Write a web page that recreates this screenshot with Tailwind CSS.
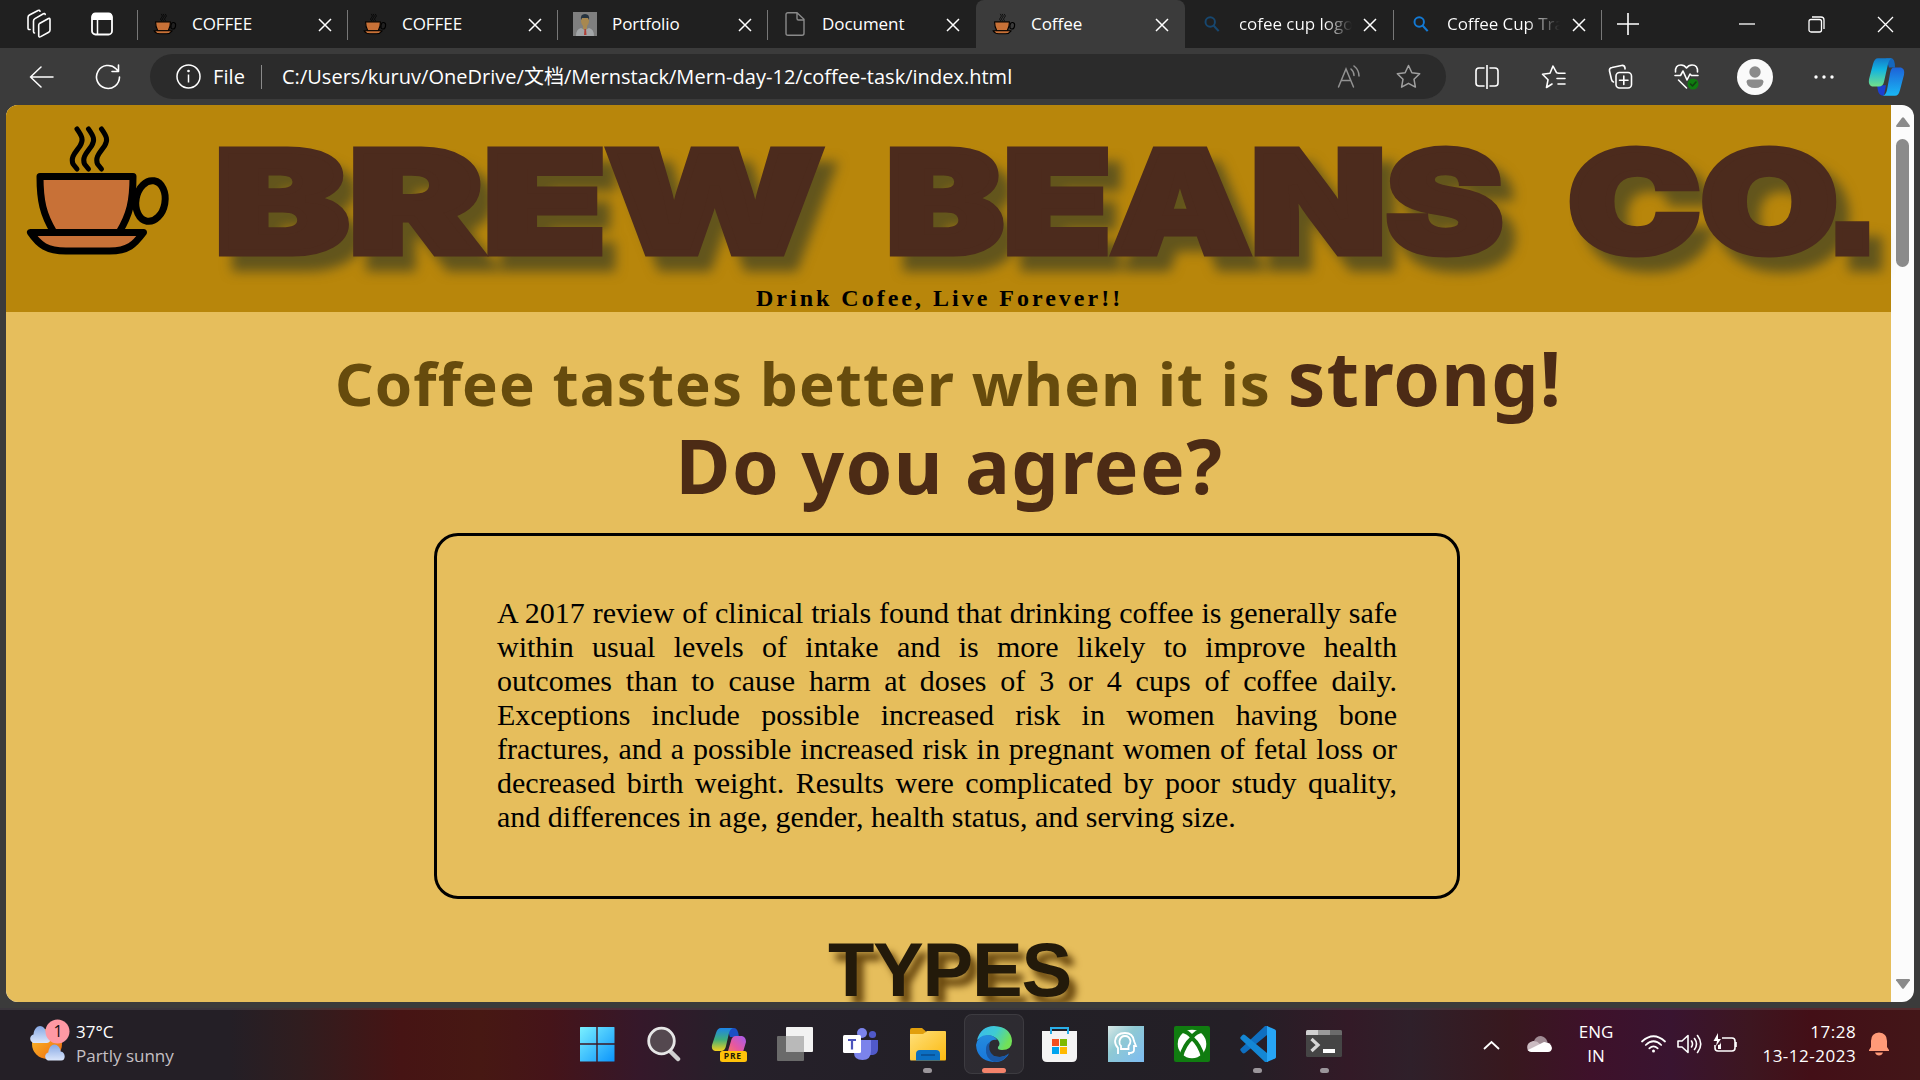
<!DOCTYPE html>
<html lang="en">
<head>
<meta charset="utf-8">
<title>Coffee</title>
<script src="https://cdn.jsdelivr.net/npm/@tailwindcss/browser@4"></script>
</head>
<body class="w-[1920px] h-[1080px] overflow-hidden bg-[#3b3b3b] text-white font-['Open_Sans','Noto_Sans_CJK_SC',sans-serif] flex flex-col">

<svg class="absolute w-0 h-0">
  <defs>
    <linearGradient id="win" gradientUnits="userSpaceOnUse" x1="0" y1="0" x2="36" y2="36"><stop offset="0" stop-color="#7df3ff"/><stop offset="1" stop-color="#0a93fb"/></linearGradient>
    <linearGradient id="cpA" x1="0" y1="0" x2="0" y2="1"><stop offset="0" stop-color="#1479c9"/><stop offset=".4" stop-color="#12b4e0"/><stop offset="1" stop-color="#72e08a"/></linearGradient>
    <linearGradient id="cpB" x1="0" y1="0" x2="0" y2="1"><stop offset="0" stop-color="#1d62d8"/><stop offset="1" stop-color="#19b8f5"/></linearGradient>
    <linearGradient id="cpC" x1="0" y1="0" x2="0" y2="1"><stop offset="0" stop-color="#1d84e8"/><stop offset=".5" stop-color="#3fae7c"/><stop offset="1" stop-color="#f4d01c"/></linearGradient>
    <linearGradient id="cpD" x1="1" y1="0" x2="0" y2="1"><stop offset="0" stop-color="#a45cf0"/><stop offset=".5" stop-color="#e7589f"/><stop offset="1" stop-color="#ff8a3c"/></linearGradient>
    <linearGradient id="fold" x1="0" y1="0" x2="1" y2="1"><stop offset="0" stop-color="#ffe07a"/><stop offset="1" stop-color="#fbb90f"/></linearGradient>
    <linearGradient id="edgeA" x1="0" y1="0" x2="1" y2=".4"><stop offset="0" stop-color="#2fb4f0"/><stop offset=".55" stop-color="#35c9d0"/><stop offset="1" stop-color="#6be04e"/></linearGradient>
    <linearGradient id="edgeB" x1="0" y1="0" x2="0" y2="1"><stop offset="0" stop-color="#1a86dd"/><stop offset="1" stop-color="#0b6fd8"/></linearGradient>
    <linearGradient id="headBg" x1="0" y1="0" x2="1" y2="1"><stop offset="0" stop-color="#d9e8e6"/><stop offset=".4" stop-color="#8fc9d3"/><stop offset="1" stop-color="#7dbcf2"/></linearGradient>
    <linearGradient id="sun" x1="0" y1="0" x2="1" y2="1"><stop offset="0" stop-color="#f9c22c"/><stop offset="1" stop-color="#f0660e"/></linearGradient>
    <linearGradient id="cloudG" x1="0" y1="0" x2="0" y2="1"><stop offset="0" stop-color="#86a8e4"/><stop offset="1" stop-color="#dbe6fb"/></linearGradient>
    <symbol id="cup" viewBox="24 121 150 138">
      <g fill="none" stroke="#000" stroke-linecap="round" stroke-linejoin="round">
        <path stroke-width="5" d="M77 129c5 7 7 11 3 17s-10 11-7 18l4 5M88.500 129c5 7 7 11 3 17s-10 11-7 18l4 5M101.500 129c5 7 7 11 3 17s-10 11-7 18l4 5"/>
        <path fill="#c87137" stroke-width="7" d="M40 176.500h93c0 24-3 38-14 56H54c-11-18-14-32-14-56z"/>
        <ellipse cx="150.500" cy="201" rx="14.500" ry="20.500" stroke-width="7" transform="rotate(10 150.500 201)"/>
        <path fill="#c87137" stroke-width="7" d="M30.500 232.500h113c-9 12-15 18.500-34 18.500H66c-19 0-27-6-35.500-18.500z"/>
      </g>
    </symbol>
    <symbol id="x" viewBox="0 0 14 14"><path d="M1 1l12 12M13 1L1 13" stroke="#fff" stroke-width="1.500" fill="none"/></symbol>
    <symbol id="mag" viewBox="0 0 18 18"><path d="M10.500 10.500L16.500 17" stroke="currentColor" stroke-width="2.400"/><circle cx="7" cy="6.800" r="5.300" fill="none" stroke="currentColor" stroke-width="2.200"/></symbol>
    <symbol id="cl" viewBox="0 0 22 17"><path fill="url(#cloudG)" d="M4 17a4.500 4.500 0 0 1 .5-8.500C5 3 8 0 11 0s6 3 6.500 7.500C23 8 23 17 18 17z"/></symbol>
  </defs>
</svg>

<!-- Tab strip -->
<div class="h-12 shrink-0 bg-[#202020] flex items-stretch text-[17px] tracking-[-0.05px]">
  <div class="w-[137px] flex items-center">
    <svg class="ml-[26px] w-[26px] h-[30px]" viewBox="0 0 26 30" fill="none" stroke="#fff" stroke-width="1.600" stroke-linejoin="round" stroke-linecap="round"><path d="M13.500 14.500l9-5q1.500-.8 1.500 1v10.500q0 1.500-1.300 2.200l-8 4.400q-2 1-2-1V16.500q0-1.300.8-2zM8.500 24q-1 0-1-1.500V12q0-1.600 1.400-2.400l8.500-4.800q1.400-.8 1.800.7M4 20.500q-2 .3-2-1.500V8.500q0-1.700 1.400-2.500L12 1.500q1.500-.7 2 .7"/></svg>
    <svg class="ml-[39px] w-[22px] h-[24px]" viewBox="0 0 22 24"><rect x="1" y="1.500" width="20" height="21" rx="3.500" fill="none" stroke="#fff" stroke-width="1.800"/><path d="M1 8V4q0-3 3-3h14q3 0 3 3v4z" fill="#fff"/><path d="M6.500 8v14" stroke="#fff" stroke-width="1.500"/></svg>
  </div>
  <div class="w-[210px] flex items-center pl-4 relative before:content-[''] before:absolute before:left-0 before:top-[10px] before:h-[30px] before:w-px before:bg-[#777]">
    <svg class="w-6 h-6"><use href="#cup"/></svg><span class="ml-[15px] w-[126px]">COFFEE</span><svg class="w-[14px] h-[14px] mt-px"><use href="#x"/></svg>
  </div>
  <div class="w-[210px] flex items-center pl-4 relative before:content-[''] before:absolute before:left-0 before:top-[10px] before:h-[30px] before:w-px before:bg-[#777]">
    <svg class="w-6 h-6"><use href="#cup"/></svg><span class="ml-[15px] w-[126px]">COFFEE</span><svg class="w-[14px] h-[14px] mt-px"><use href="#x"/></svg>
  </div>
  <div class="w-[210px] flex items-center pl-4 relative before:content-[''] before:absolute before:left-0 before:top-[10px] before:h-[30px] before:w-px before:bg-[#777]">
    <svg class="w-6 h-6" viewBox="0 0 24 24"><path fill="#7f7f7f" d="M0 0h24v24H0z"/><path fill="#a3a6a8" d="M3 24q0-7 5-8l4 2 4-2q5 1 5 8z"/><ellipse cx="12" cy="9" rx="4" ry="5.500" fill="#a88850"/><path fill="#a88850" d="M10 13h4v4l-2 1-2-1z"/><path fill="#26333f" d="M8 8q-1-6 4-6t4 6l-1-2H9z"/><path fill="#b04038" d="M11.500 17h1.500l.5 6h-2.500z"/></svg><span class="ml-[15px] w-[126px]">Portfolio</span><svg class="w-[14px] h-[14px] mt-px"><use href="#x"/></svg>
  </div>
  <div class="w-[209px] flex items-center pl-4 relative before:content-[''] before:absolute before:left-0 before:top-[10px] before:h-[30px] before:w-px before:bg-[#777]">
    <svg class="w-6 h-6" viewBox="0 0 24 24" fill="none" stroke="#8a8a8a" stroke-width="1.400"><path d="M5 .700h9l7 6.500v14q0 2-2 2H5q-2 0-2-2v-18.500q0-2 2-2zM14 1v5.500q0 1.500 1.500 1.500H21"/></svg><span class="ml-[15px] w-[124px]">Document</span><svg class="w-[14px] h-[14px] mt-px"><use href="#x"/></svg>
  </div>
  <div class="w-[209px] flex items-center pl-4 bg-[#3b3b3b] rounded-t-lg">
    <svg class="w-6 h-6"><use href="#cup"/></svg><span class="ml-[15px] w-[124px]">Coffee</span><svg class="w-[14px] h-[14px] mt-px"><use href="#x"/></svg>
  </div>
  <div class="w-[208px] flex items-center pl-[19px]">
    <svg class="w-4 h-4 text-[#17476f]"><use href="#mag"/></svg><span class="ml-[19px] w-[113px] overflow-hidden whitespace-nowrap bg-gradient-to-r from-white from-75% to-transparent bg-clip-text text-transparent">cofee cup logo</span><svg class="ml-[11px] shrink-0 w-[14px] h-[14px] mt-px"><use href="#x"/></svg>
  </div>
  <div class="w-[209px] flex items-center pl-[20px] relative before:content-[''] before:absolute before:left-0 before:top-[10px] before:h-[30px] before:w-px before:bg-[#777] after:content-[''] after:absolute after:right-0 after:top-[10px] after:h-[30px] after:w-px after:bg-[#777]">
    <svg class="w-4 h-4 text-[#1379d3]"><use href="#mag"/></svg><span class="ml-[18px] w-[113px] overflow-hidden whitespace-nowrap bg-gradient-to-r from-white from-70% to-transparent bg-clip-text text-transparent">Coffee Cup Tra</span><svg class="ml-[12px] shrink-0 w-[14px] h-[14px] mt-px"><use href="#x"/></svg>
  </div>
  <div class="flex-1 flex items-center">
    <svg class="ml-[15px] w-[22px] h-[22px]" viewBox="0 0 22 22"><path d="M11 0v22M0 11h22" stroke="#fff" stroke-width="1.600"/></svg>
    <svg class="ml-[100px] w-[16px] h-[16px]" viewBox="0 0 16 16"><path d="M0 8h16" stroke="#fff" stroke-width="1.300"/></svg>
    <svg class="ml-[53px] w-[17px] h-[17px]" viewBox="0 0 17 17" fill="none" stroke="#fff" stroke-width="1.300"><rect x="1" y="3.500" width="12.500" height="12.500" rx="2"/><path d="M4 1h9q3 0 3 3v9"/></svg>
    <svg class="ml-[52px] w-[17px] h-[17px]" viewBox="0 0 17 17"><path d="M1 1l15 15M16 1L1 16" stroke="#fff" stroke-width="1.300"/></svg>
  </div>
</div>

<!-- Toolbar -->
<div class="h-[57px] shrink-0 flex items-center">
  <svg class="ml-[29px] w-[25px] h-[22px]" viewBox="0 0 25 22" fill="none" stroke="#fff" stroke-width="1.500" stroke-linecap="round" stroke-linejoin="round"><path d="M12 1L1.500 11 12 21M1.500 11H24"/></svg>
  <svg class="ml-[41px] w-[26px] h-[26px]" viewBox="0 0 26 26" fill="none" stroke="#fff" stroke-width="1.600" stroke-linecap="round" stroke-linejoin="round"><path d="M24.500 13A11.500 11.500 0 1 1 21 4.700L23 7M23.500 1v6.500H17"/></svg>
  <div class="ml-[29px] w-[1296px] h-[45px] rounded-full bg-[#2b2b2b] flex items-center">
    <svg class="ml-[26px] w-[25px] h-[25px]" viewBox="0 0 25 25" fill="none" stroke="#fff" stroke-width="1.500"><circle cx="12.500" cy="12.500" r="11.500"/><path d="M12.500 10.500v8"/><circle cx="12.500" cy="7" r=".6" fill="#fff"/></svg>
    <span class="ml-[12px] w-[48px] text-[20px] tracking-[0.1px]">File</span>
    <span class="w-px h-6 bg-[#8a8a8a]"></span>
    <span class="ml-[20px] w-[1055px] text-[20px] tracking-[0.02px] whitespace-nowrap">C:/Users/kuruv/OneDrive/文档/Mernstack/Mern-day-12/coffee-task/index.html</span>
    <svg class="w-[24px] h-[24px] shrink-0" viewBox="0 0 24 24" fill="none" stroke="#929292" stroke-width="1.500" stroke-linecap="round"><path d="M1.500 22L9 4l7.500 18M4.500 15.500h9M14 4q3 2.500 3 6.500M17 1q5 4 5 10"/></svg>
    <svg class="ml-[35px] w-[25px] h-[25px] shrink-0" viewBox="0 0 25 25" fill="none" stroke="#a0a0a0" stroke-width="1.500" stroke-linejoin="round"><path d="M12.500 1.500l3.400 7.200 7.800 1-5.700 5.500 1.400 7.900-6.900-3.800-6.900 3.800L7 15.200 1.300 9.700l7.800-1z"/></svg>
  </div>
  <svg class="ml-[29px] w-[24px] h-[24px]" viewBox="0 0 24 24" fill="none" stroke="#fff" stroke-width="1.600" stroke-linecap="round"><path d="M12 0v24M9 3H4Q1 3 1 6v12q0 3 3 3h5M15 3h5q3 0 3 3v12q0 3-3 3h-5"/></svg>
  <svg class="ml-[42px] w-[25px] h-[24px]" viewBox="0 0 25 24" fill="none" stroke="#fff" stroke-width="1.600" stroke-linecap="round" stroke-linejoin="round"><path d="M17 8l-1.500-.3L12 1 9 8.200l-7.500 1L7 14.800 5.500 22.500 11 19M17 8.200h7M16 13.500h8M17 19h7"/></svg>
  <svg class="ml-[42px] w-[25px] h-[29px]" viewBox="0 -2 25 29" fill="none" stroke="#fff" stroke-width="1.600" stroke-linecap="round" stroke-linejoin="round"><rect x="8" y="8.500" width="15.500" height="15.500" rx="3.500"/><path d="M15.800 12v8.500M11.500 16.200H20M17 5V4q-.5-3-3.500-2.500L4 3.500Q1 4 1.500 7l2 8.500q.5 2 2 2.500"/></svg>
  <svg class="ml-[41px] w-[25px] h-[27px]" viewBox="0 0 25 27" fill="none" stroke="#fff" stroke-width="1.600" stroke-linecap="round" stroke-linejoin="round"><path d="M1.500 9Q1 2 7 2q3.500 0 5.500 3Q14.500 2 18 2q6 0 5.500 7M1 12.500h5.500L9 8l4 9 3-6 1.500 1.500H24M4.500 17l8 8"/><circle cx="19" cy="21" r="5.500" fill="#107c10" stroke="none"/><path d="M16.500 21l2 2 3.500-4" stroke="#123f12"/></svg>
  <svg class="ml-[38px] w-[36px] h-[36px]" viewBox="0 0 36 36"><circle cx="18" cy="18" r="18" fill="#fafafa"/><circle cx="18" cy="13" r="5.700" fill="#8b8b8b"/><path d="M12 20.500h12q2.500 0 2.500 2.500-1 6-8.500 6t-8.500-6q0-2.500 2.500-2.500z" fill="#8b8b8b"/></svg>
  <svg class="ml-[41px] w-[20px] h-[4px]" viewBox="0 0 20 4" fill="#fff"><circle cx="2" cy="2" r="1.700"/><circle cx="10" cy="2" r="1.700"/><circle cx="18" cy="2" r="1.700"/></svg>
  <svg class="ml-[34px] w-[37px] h-[40px]" viewBox="0 0 37 34" preserveAspectRatio="none"><path fill="#1c3fd0" d="M9 24h9l-2 9q-5 0-6-4z"/><path fill="#1567bd" d="M18 1h5q4 0 4 8h-6z"/><path fill="url(#cpA)" d="M10 1h14q-3 1-4 5l-4 15q-1 4-5 4H4q-4-1-3-6L5 6q1.500-5 5-5z"/><path fill="url(#cpB)" d="M26 9h7q4 1 3 6l-4 13q-1.500 5-5 5H15q3-1 4-5l3-14q1-5 4-5z"/></svg>
</div>

<!-- Page viewport -->
<div class="ml-[6px] w-[1908px] h-[897px] shrink-0 rounded-xl overflow-hidden flex bg-[#fcfcfc]">
  <main class="w-[1885px] bg-[#e6be5c] text-black">
    <header class="h-[207px] bg-[#b8860b] flex flex-col">
      <div class="flex h-[172px]">
        <svg class="w-[180px] h-[172px] shrink-0" viewBox="6 105 180 172"><use href="#cup" x="24" y="121" width="150" height="138"/></svg>
        <h1 class="w-[1705px] h-[172px]">
          <svg class="w-full h-full overflow-visible drop-shadow-[13px_15px_6px_rgba(45,55,38,0.62)]" viewBox="186 105 1705 172" fill="#4c2b1d" stroke="#4c2b1d" stroke-width="7" font-family="Inter" font-weight="900" font-size="141"><text x="214.500" y="252.500" textLength="609" lengthAdjust="spacingAndGlyphs">BREW</text><text x="886" y="252.500" textLength="617" lengthAdjust="spacingAndGlyphs">BEANS</text><text y="252.500"><tspan x="1568" textLength="270" lengthAdjust="spacingAndGlyphs">CO</tspan><tspan x="1826" font-family="Liberation Sans" font-weight="700" font-size="190">.</tspan></text></svg>
        </h1>
      </div>
      <p class="pl-[750px] mt-[7px] leading-[28px] text-[24px] font-bold tracking-[3px] font-['Liberation_Serif',serif] whitespace-nowrap">Drink Cofee, Live Forever!!</p>
    </header>
    <div class="h-[221px] pt-[21px] text-center font-['Noto_Sans',sans-serif] font-bold text-[#4c2b15] text-[75px] whitespace-nowrap">
      <p class="leading-[88px] tracking-[1.1px]"><span class="text-[60px] leading-none text-[#664b0d]">Coffee tastes better when it is </span>strong!</p>
      <p class="leading-[88px] tracking-[1.450px] pl-[2px]">Do you agree?</p>
    </div>
    <section class="ml-[428px] w-[1026px] h-[366px] border-3 border-black rounded-3xl px-[60px] pt-[60px] font-['Liberation_Serif',serif] text-[30px] leading-[34px] [&>p]:[text-align-last:justify] [&>p]:whitespace-nowrap">
      <p>A 2017 review of clinical trials found that drinking coffee is generally safe</p>
      <p>within usual levels of intake and is more likely to improve health</p>
      <p>outcomes than to cause harm at doses of 3 or 4 cups of coffee daily.</p>
      <p>Exceptions include possible increased risk in women having bone</p>
      <p>fractures, and a possible increased risk in pregnant women of fetal loss or</p>
      <p>decreased birth weight. Results were complicated by poor study quality,</p>
      <div>and differences in age, gender, health status, and serving size.</div>
    </section>
    <h2 class="mt-[28px] pl-[2px] text-center font-['Liberation_Sans',sans-serif] font-bold text-[76px] tracking-[-1.200px] leading-[86px] text-[#231a0a] [text-shadow:7px_9px_7px_#6b4a10]">TYPES</h2>
  </main>
  <div class="flex-1 flex flex-col items-center pt-[12px] pb-[13px]">
    <svg class="w-[14px] h-[10px]" viewBox="0 0 14 10"><path d="M6 .8q1-1.200 2 0l6 8q0 1.200-1 1.200H1q-1 0-1-1.200z" fill="#8b8b8b"/></svg>
    <div class="mt-[12px] w-[13px] h-[128px] rounded-full bg-[#8b8b8b]"></div>
    <svg class="mt-auto w-[14px] h-[10px] rotate-180" viewBox="0 0 14 10"><path d="M6 .8q1-1.200 2 0l6 8q0 1.200-1 1.200H1q-1 0-1-1.200z" fill="#8b8b8b"/></svg>
  </div>
</div>

<!-- Taskbar -->
<footer class="mt-[6px] h-[72px] shrink-0 border-t-2 border-white/10 bg-[linear-gradient(90deg,#241f26_0px,#241f26_230px,#301d1f_300px,#461414_400px,#471813_480px,#451419_550px,#35182a_640px,#26202a_730px,#222026_1000px,#241f26_1240px,#331a27_1350px,#2f202a_1410px,#38181e_1510px,#3e112a_1590px,#391430_1670px,#3d1620_1750px,#430f17_1810px,#431618_1920px)] flex items-center">
  <div class="w-[564px] flex items-center">
    <svg class="ml-[28px] w-[42px] h-[54px] shrink-0" viewBox="28 1016 42 54"><circle cx="47" cy="1042" r="15" fill="url(#sun)"/><use href="#cl" x="29" y="1024" width="22" height="17"/><use href="#cl" x="44" y="1042" width="21" height="17"/><circle cx="57.500" cy="1029.500" r="12" fill="#ff99a4"/><text x="53.500" y="1035" font-size="16" fill="#111" font-family="Open Sans">1</text></svg>
    <div class="ml-[6px] -mt-[3px] text-[17px] leading-[24px]"><div>37°C</div><div class="text-[#c5c0c4]">Partly sunny</div></div>
  </div>
  <div class="flex h-full [&>div]:w-[66.100px] [&>div]:shrink-0 [&>div]:flex [&>div]:justify-center [&>div]:relative [&>div]:pt-[16px]">
    <div><svg class="w-9 h-9" viewBox="0 0 36 36" fill="url(#win)"><path d="M1.500 1H17.300v16.300H1V1.500zM18.700 1H35a.5.500 0 0 1 .5.500v15.800H18.700zM1 18.700h16.300V35.500H1.500a.5.500 0 0 1-.5-.5zM18.700 18.700h16.800V35a.5.500 0 0 1-.5.500H18.700z"/></svg></div>
    <div><svg class="w-9 h-9" viewBox="0 0 36 36"><path d="M24 24l9 9" stroke="#cfcfcf" stroke-width="4.500" stroke-linecap="round"/><circle cx="16.500" cy="15" r="12.800" fill="#54484f" stroke="#e6e6e6" stroke-width="2.800"/></svg></div>
    <div><svg class="w-9 h-9" viewBox="0 0 36 36"><path fill="#1b4fc4" d="M16 2h7q4 0 5 9h-9z"/><path fill="url(#cpC)" d="M10 2h12q-3 1-4 5l-3 13q-1 5-5 5H4q-4-1-3-6L5 7q1.500-5 5-5z"/><path fill="url(#cpD)" d="M25 10h6q4 1 4 6l-3 10q-1 4-5 4H13q3-1 4-5l3-10q1-5 5-5z"/><rect x="9" y="25" width="27" height="11" rx="2.500" fill="#ffc20a"/><text x="12.800" y="33.300" font-size="8.500" font-weight="700" letter-spacing=".8" fill="#231a05" font-family="Open Sans">PRE</text></svg></div>
    <div><svg class="w-9 h-9" viewBox="0 0 36 36"><rect x="9" y="1" width="27" height="25" rx="1" fill="#f2f2f2"/><rect y="10" width="27" height="25" rx="1" fill="#6a6a6a"/><path fill="#b9b9b9" d="M9 10h18v16H9z"/></svg></div>
    <div><svg class="w-9 h-9" viewBox="0 0 36 36"><circle cx="19" cy="7" r="5" fill="#7b83eb"/><circle cx="29.500" cy="8.500" r="3.600" fill="#5059c9"/><path d="M26 14h9v9q0 5-5 6h-4z" fill="#5059c9"/><path d="M11 14h17v11q0 9-8.500 9T11 27z" fill="#7b83eb"/><rect y="9" width="18" height="18" rx="1.500" fill="#fff"/><path d="M5 14h8M9 14v9.500" stroke="#4b53bc" stroke-width="2.200"/></svg></div>
    <div><svg class="w-9 h-9" viewBox="0 0 36 36"><path fill="#e19f0c" d="M0 4q0-2 2-2h10l4 3.500L14 9H0z"/><path fill="url(#fold)" d="M0 8h13l4-3h18q1 0 1 1v27q0 1.500-1 1.500H1q-1 0-1-1.500z"/><path fill="#0b6fc2" d="M6 34.500V28q0-4 4-4h16q4 0 4 4v6.500z"/><path stroke="#0a4b8c" stroke-width="1.500" d="M11 29h14"/></svg><i class="absolute bottom-[7px] w-[9px] h-[5px] rounded-full bg-[#9b969b]"></i></div>
    <div class="before:content-[''] before:absolute before:top-[4px] before:left-[3px] before:w-[60px] before:h-[60px] before:rounded-lg before:bg-white/5 before:border before:border-white/8"><svg class="w-9 h-9" viewBox="0 0 36 36"><path fill="url(#edgeA)" d="M1 14Q5 0 18 0q17 1 18 15 0 9-10 9-5 0-4-3 3-3 0-7-8-9-21 0z"/><path fill="url(#edgeB)" d="M0 19Q2 9 11 9q7 0 10 5-6-1-8 4-2 13 11 13 5 0 9-3-6 9-16 8Q1 34 0 19z"/><path fill="#0e4fa0" d="M14 16q-3 9 4 14 8 3 15-3-5 9-15 9-9-4-8-13 0-5 4-7z"/></svg><i class="absolute bottom-[7px] w-6 h-[5px] rounded-full bg-[#f4836b]"></i></div>
    <div><svg class="w-9 h-9" viewBox="0 0 36 36"><path fill="#f4f4f4" d="M0 5h35v26q0 5-5 5H5q-5 0-5-5z"/><path fill="none" stroke="#29aee8" stroke-width="2" d="M9 8V2h17v6"/><path fill="#f25022" d="M10 13h7v7h-7z"/><path fill="#7fba00" d="M18 13h7v7h-7z"/><path fill="#00a4ef" d="M10 21h7v7h-7z"/><path fill="#ffb900" d="M18 21h7v7h-7z"/></svg></div>
    <div><svg class="w-9 h-9" viewBox="0 0 36 36"><path fill="url(#headBg)" d="M0 0h36v36H0z"/><g fill="none" stroke="#fff" stroke-width="1.800"><path d="M10 28v-6q-3-3-3-7 1-8 10-8 8 0 9 8l2 5h-2v4q0 3-5 3v2"/><path d="M13 23v-3q-2-2-1.500-5 1-5 5.500-5t5.500 5q0 3-2 5v3z"/></g></svg></div>
    <div><svg class="w-9 h-9" viewBox="0 0 36 36"><rect width="36" height="36" rx="2" fill="#107c10"/><circle cx="18" cy="18" r="14.300" fill="#fff"/><path fill="none" stroke="#107c10" stroke-width="4" d="M7 31Q10 19 18 12q8 7 11 19M9 5q5 1 9 6 4-5 9-6"/></svg></div>
    <div><svg class="w-9 h-9" viewBox="0 0 36 36"><path fill="#0f6fc0" d="M27 9L5 27q-1.500 1-3-.5L.7 24.700q-1-1.200.2-2.300L25 0h3z"/><path fill="#1487d4" d="M27 27L5 9Q3.500 8 2 9.500L.7 11q-1 1.200.2 2.300L25 36h3z"/><path fill="#27a5f5" d="M27 0l8 3.500q1 .5 1 1.500v26q0 1-1 1.500L27 36z"/></svg><i class="absolute bottom-[7px] w-[9px] h-[5px] rounded-full bg-[#9b969b]"></i></div>
    <div><svg class="w-9 h-9" viewBox="0 0 36 36"><rect y="4" width="36" height="27" rx="1.500" fill="#454545"/><path fill="#d0d0d0" d="M1.500 4H12v5H0V5.500Q0 4 1.500 4z"/><path fill="#9a9a9a" d="M12 4h12v5H12z"/><path fill="#6b6b6b" d="M24 4h10.500Q36 4 36 5.500V9H24z"/><path d="M5.500 13l6.500 6-6.500 6" fill="none" stroke="#d8d8d8" stroke-width="3.200"/><path fill="#fff" d="M17 23h12v4H17z"/></svg><i class="absolute bottom-[7px] w-[9px] h-[5px] rounded-full bg-[#9b969b]"></i></div>
  </div>
  <div class="flex-1 flex items-center text-[17px] leading-[24px]">
    <svg class="ml-[126px] w-[17px] h-[10px] shrink-0" viewBox="0 0 17 10"><path d="M1 9l7.500-7L16 9" fill="none" stroke="#fff" stroke-width="1.800"/></svg>
    <svg class="ml-[27px] w-[25px] h-[17px] shrink-0 -mt-0.5" viewBox="0 0 25 17"><path fill="#a08c94" d="M7 5q2-5 7-5 5 1 6.500 6L13 9z"/><path fill="#cbbcc2" d="M1 15q-3-8 5-10 4-.5 7 3l6 5z"/><path fill="#fff" d="M4 16q-2 0-3-2l16-8q7 0 8 6-.5 4-4 4z"/></svg>
    <div class="ml-[24px] w-[40px] -mt-0.5 text-center">ENG<br>IN</div>
    <svg class="ml-[25px] w-[25px] h-[18px] shrink-0 -mt-0.5" viewBox="0 0 25 18" fill="none" stroke="#fff" stroke-width="1.700" stroke-linecap="round"><path d="M1 6.500Q12.500-4 24 6.500M4.800 10q7.700-7.500 15.400 0M8.300 13.300q4.200-4 8.400 0"/><circle cx="12.500" cy="16" r="1.500" fill="#fff" stroke="none"/></svg>
    <svg class="ml-[11px] w-[25px] h-[20px] shrink-0 -mt-0.5" viewBox="0 0 25 20" fill="none" stroke="#fff" stroke-width="1.600" stroke-linejoin="round" stroke-linecap="round"><path d="M1 7h4l6-5.500v17L5 13H1zM14.500 7q2 3 0 6M17.500 4.500q4 5.500 0 11M20.500 1.500q6.500 8.500 0 17"/></svg>
    <svg class="ml-[11px] w-[25px] h-[20px] shrink-0 -mt-1" viewBox="0 0 25 20" fill="none" stroke="#fff" stroke-width="1.600"><path d="M9 5h10q3 0 3 3v7q0 3-3 3H5q-3 0-3-3v-3M23 9v5"/><path fill="#fff" stroke="none" d="M5 0L.5 8H4l-1 5 5-7H5zM5 15v-3q3 0 3-4v8H5z"/></svg>
    <div class="ml-[12px] w-[106px] -mt-[3px] text-right tracking-[0.5px]">17:28<br>13-12-2023</div>
    <svg class="ml-[13px] w-[20px] h-[24px] shrink-0 -mt-0.5" viewBox="0 0 20 24" fill="#ff9a78"><path d="M2 9q0-8 8-8.500Q18 1 18 9v6l2 3v1H0v-1l2-3zM6 20.500h8q-1 3-4 3t-4-3z"/></svg>
  </div>
</footer>
</body>
</html>
